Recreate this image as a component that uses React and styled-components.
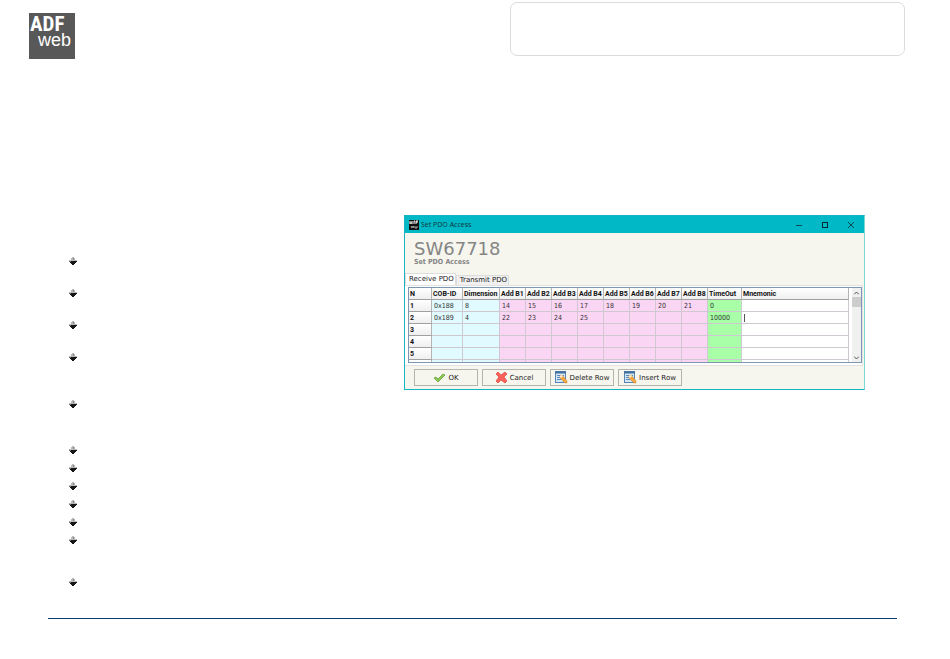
import React from "react";
import styled, { createGlobalStyle } from "styled-components";

const GlobalStyle = createGlobalStyle`
  * {
    box-sizing: border-box;
  }
  body {
    margin: 0;
    background: #fff;
    font-family: "DejaVu Sans", Verdana, sans-serif;
  }
`;

const Header = styled.header`
  display: flex;
  justify-content: space-between;
  align-items: flex-start;
  padding: 2px 45px 0 29px;
`;
const Logo = styled.a`
  display: block;
  margin-top: 11px;
  height: 46px;
`;
const HeaderBox = styled.div`
  width: 46%;
  max-width: 395px;
  height: 54px;
  border: 1px solid #dcdcdc;
  border-radius: 7px;
`;
const Main = styled.main`
  display: flex;
  align-items: flex-start;
  padding: 156px 85px 0 69px;
`;
const BulletList = styled.ul`
  width: 335px;
  flex-shrink: 0;
  margin: 0;
  padding: 42px 0 0;
  list-style: none;
`;
const Bullet = styled.li`
  height: ${(props) => props.$space}px;
  line-height: 0;
`;
const Dialog = styled.section`
  flex: 1;
  min-width: 0;
  background: #f7f6ee;
  border: 1px solid #16b4c2;
  border-right-color: #7fd8d8;
`;
const TitleBar = styled.div`
  display: flex;
  align-items: center;
  height: 17px;
  padding-left: 4px;
  background: #00b8c6;
`;
const Title = styled.span`
  flex: 1;
  margin-left: 2px;
  font-family: "Open Sans", sans-serif;
  font-size: 7px;
  color: #10343a;
`;
const WindowButton = styled.button`
  display: flex;
  align-items: center;
  justify-content: center;
  width: 26px;
  height: 17px;
  padding: 0;
  border: 0;
  background: none;
`;
const Heading = styled.div`
  height: 40px;
  padding: 7px 9px 0;
  color: #858585;
`;
const Product = styled.h1`
  margin: 0;
  font-size: 18px;
  line-height: 18px;
  font-weight: normal;
`;
const Subtitle = styled.h2`
  margin: 0;
  font-family: "DejaVu Sans Condensed", "DejaVu Sans", sans-serif;
  font-size: 7px;
  line-height: 8px;
`;
const Tabs = styled.div`
  display: flex;
  align-items: flex-end;
  height: 12px;
`;
const Tab = styled.button`
  height: ${(props) => (props.$active ? 12 : 10)}px;
  padding: 0 1px 0 3px;
  border: 1px solid #dcdcdc;
  border-bottom: 0;
  background: ${(props) => (props.$active ? "#fff" : "#f0f0f0")};
  font-family: inherit;
  font-size: 7px;
  line-height: 9px;
  color: #222;
`;
const Panel = styled.div`
  padding: 1px 0 2px 2px;
  margin-right: 1px;
  background: #fff;
  border: 1px solid #e2e2e2;
  border-left: 0;
`;
const GridBox = styled.div`
  display: flex;
  height: 76px;
  margin-left: 1px;
  overflow: hidden;
  border: 1px solid #7c97b4;
`;
const GridArea = styled.div`
  flex: 1;
  min-width: 0;
  overflow: hidden;
`;
const Grid = styled.table`
  width: 100%;
  table-layout: fixed;
  border-collapse: separate;
  border-spacing: 0;
  font-family: Roboto, sans-serif;
  font-size: 7px;
  line-height: 10px;
  color: #111;
`;
const Column = styled.col`
  width: ${(props) => (props.$width ? `${props.$width}px` : "auto")};
`;
const HeadCell = styled.th`
  height: 12px;
  padding: 0 0 0 1px;
  overflow: hidden;
  white-space: nowrap;
  text-align: left;
  border-right: 1px solid #b4b4b4;
  border-bottom: 1px solid #a0a0a0;
  background: linear-gradient(#fff, #efefef);
`;
const Cell = styled.td`
  height: 12px;
  padding: 0 0 0 2px;
  font-family: "DejaVu Sans Condensed", "DejaVu Sans", sans-serif;
  color: #333;
  white-space: nowrap;
  border-right: 1px solid #d0c8d0;
  border-bottom: 1px solid #d0c8d0;
  background: ${(props) => props.$color};
`;
const Caret = styled.span`
  display: block;
  width: 1px;
  height: 8px;
  background: #555;
`;
const ScrollBar = styled.div`
  display: flex;
  flex-direction: column;
  align-items: center;
  width: 9px;
  margin-left: 3px;
  background: #f0f0f0;
`;
const ScrollButton = styled.button`
  display: flex;
  align-items: center;
  justify-content: center;
  width: 9px;
  height: 9px;
  padding: 0;
  border: 0;
  background: none;
`;
const Thumb = styled.div`
  width: 9px;
  height: 10px;
  margin-bottom: auto;
  background: #cdcdcd;
`;
const Actions = styled.div`
  display: flex;
  gap: 4px;
  padding: 3px 9px;
`;
const ActionButton = styled.button`
  display: flex;
  align-items: center;
  justify-content: center;
  gap: 2px;
  width: 64px;
  height: 17px;
  padding: 0;
  border: 1px solid #b5b4ad;
  background: #f7f6ee;
  font-family: inherit;
  font-size: 7px;
  color: #222;
  white-space: nowrap;
`;
const Rule = styled.hr`
  margin: 30px 53px 0 48px;
  border: 0;
  border-top: 1px solid #0b3d75;
`;

const bulletSpaces = [32, 32, 32, 47, 46, 18, 18, 18, 18, 18, 42, 10];

const cyan = "#e0faff";
const pink = "#fbd5f4";
const green = "#a8ffa8";

const columns = [
  { name: "N", width: 23 },
  { name: "COB-ID", width: 31, color: cyan },
  { name: "Dimension", width: 37, color: cyan },
  { name: "Add B1", width: 26, color: pink },
  { name: "Add B2", width: 26, color: pink },
  { name: "Add B3", width: 26, color: pink },
  { name: "Add B4", width: 26, color: pink },
  { name: "Add B5", width: 26, color: pink },
  { name: "Add B6", width: 26, color: pink },
  { name: "Add B7", width: 26, color: pink },
  { name: "Add B8", width: 26, color: pink },
  { name: "TimeOut", width: 34, color: green },
  { name: "Mnemonic", color: "#fff" },
];

const rows = [
  ["1", "0x188", "8", "14", "15", "16", "17", "18", "19", "20", "21", "0"],
  ["2", "0x189", "4", "22", "23", "24", "25", "", "", "", "", "10000"],
  ["3"],
  ["4"],
  ["5"],
  [""],
];

function LogoMark() {
  return (
    <svg width="46" height="46" viewBox="0 0 46 46">
      <rect width="46" height="46" fill="#585858" />
      <text fill="#fff" fontFamily="'Liberation Sans', sans-serif" fontSize="18">
        <tspan
          x="1"
          y="18"
          fontFamily="'Roboto Condensed', 'Liberation Sans', sans-serif"
          fontWeight="bold"
          fontSize="21"
        >
          ADF
        </tspan>
        <tspan x="9" y="33">
          web
        </tspan>
      </text>
    </svg>
  );
}

function BulletMark() {
  return (
    <svg width="8" height="8" viewBox="0 0 8 8">
      <path d="M3 0h2v1h1v2h2v1H0V3h2V1h1z" fill="#b9b9b9" />
      <path d="M4 1h1v2H4z" fill="#8c8c8c" />
      <path d="M1 4h7v1H7v1H6v1H5v1H3V7H2V6H1z" fill="#161616" />
      <path d="M0 4h2v1H0z" fill="#777" />
    </svg>
  );
}

function AppIcon() {
  return (
    <svg width="10" height="10" viewBox="0 0 10 10">
      <rect width="10" height="10" fill="#111" />
      <path d="M1 4V1M3 1v3M5 1v3M7 4V1h2M1 3h2M5 1h1M7 2h2" stroke="#fff" fill="none" />
      <path d="M2 6l1 2 1-2 1 2M6 6v2h2V6" stroke="#aaa" fill="none" />
    </svg>
  );
}

function CheckIcon() {
  return (
    <svg width="13" height="10" viewBox="0 0 13 10">
      <path d="M1 5l2-1 2 2 5-5 2 1-7 7z" fill="#8ccb4f" stroke="#5d9732" strokeWidth="0.7" />
    </svg>
  );
}

function CrossIcon() {
  return (
    <svg width="13" height="13" viewBox="0 0 13 13">
      <path
        d="M1 3l2-2 3 3 4-3 2 2-3 3 3 4-2 2-4-3-3 3-2-2 3-4z"
        fill="#f8625a"
        stroke="#dd423c"
        strokeWidth="0.7"
      />
    </svg>
  );
}

function RowIcon() {
  return (
    <svg width="13" height="13" viewBox="0 0 13 13">
      <rect x="0.5" y="0.5" width="10" height="11" fill="#d5e6f6" stroke="#5685b4" />
      <path d="M0 1.5h11" stroke="#416f9e" strokeWidth="2" />
      <path d="M2 4.500h3M6 4.500h3M2 6.500h3M2 8.500h4" stroke="#5788bb" />
      <path d="M5 5l2-1 5 6 0 2-2 0-5-5z" fill="#f4a641" stroke="#c98330" strokeWidth="0.5" />
      <path d="M5 5l2-1 1 1-2 2-1-1z" fill="#fff0cf" />
    </svg>
  );
}

const actions = [
  { label: "OK", Icon: CheckIcon },
  { label: "Cancel", Icon: CrossIcon },
  { label: "Delete Row", Icon: RowIcon },
  { label: "Insert Row", Icon: RowIcon },
];

function PdoGrid() {
  return (
    <GridBox>
      <GridArea>
        <Grid>
          <colgroup>
            {columns.map((column) => (
              <Column key={column.name} $width={column.width} />
            ))}
          </colgroup>
          <thead>
            <tr>
              {columns.map((column) => (
                <HeadCell key={column.name} scope="col">
                  {column.name}
                </HeadCell>
              ))}
            </tr>
          </thead>
          <tbody>
            {rows.map((row, rowIndex) => (
              <tr key={rowIndex}>
                <HeadCell scope="row">{row[0]}</HeadCell>
                {columns.slice(1).map((column, index) => (
                  <Cell key={column.name} $color={column.color}>
                    {row[index + 1]}
                    {column.name === "Mnemonic" && row[0] === "2" && <Caret />}
                  </Cell>
                ))}
              </tr>
            ))}
          </tbody>
        </Grid>
      </GridArea>
      <ScrollBar>
        <ScrollButton aria-label="Scroll up">
          <svg width="5" height="4" viewBox="0 0 5 4">
            <path d="M0 3.500l2.500-2.500 2.500 2.500" stroke="#555" fill="none" />
          </svg>
        </ScrollButton>
        <Thumb />
        <ScrollButton aria-label="Scroll down">
          <svg width="5" height="4" viewBox="0 0 5 4">
            <path d="M0 0.500l2.500 2.500 2.500-2.500" stroke="#555" fill="none" />
          </svg>
        </ScrollButton>
      </ScrollBar>
    </GridBox>
  );
}

function PdoDialog() {
  return (
    <Dialog>
      <TitleBar>
        <AppIcon />
        <Title>Set PDO Access</Title>
        <WindowButton aria-label="Minimize">
          <svg width="6" height="6" viewBox="0 0 6 6">
            <path d="M0 3.500h6" stroke="#0c4a50" />
          </svg>
        </WindowButton>
        <WindowButton aria-label="Maximize">
          <svg width="6" height="6" viewBox="0 0 6 6">
            <rect x="0.5" y="0.5" width="5" height="5" fill="none" stroke="#04282c" />
          </svg>
        </WindowButton>
        <WindowButton aria-label="Close">
          <svg width="6" height="6" viewBox="0 0 6 6">
            <path d="M0 0l6 6M6 0L0 6" stroke="#0c4a50" />
          </svg>
        </WindowButton>
      </TitleBar>
      <Heading>
        <Product>SW67718</Product>
        <Subtitle>Set PDO Access</Subtitle>
      </Heading>
      <Tabs role="tablist">
        <Tab role="tab" aria-selected="true" $active>
          Receive PDO
        </Tab>
        <Tab role="tab" aria-selected="false">
          Transmit PDO
        </Tab>
      </Tabs>
      <Panel>
        <PdoGrid />
      </Panel>
      <Actions>
        {actions.map(({ label, Icon }) => (
          <ActionButton key={label}>
            <Icon />
            {label}
          </ActionButton>
        ))}
      </Actions>
    </Dialog>
  );
}

function App() {
  return (
    <>
      <GlobalStyle />
      <Header>
        <Logo href="#" aria-label="ADFweb">
          <LogoMark />
        </Logo>
        <HeaderBox />
      </Header>
      <Main>
        <BulletList>
          {bulletSpaces.map((space, index) => (
            <Bullet key={index} $space={space}>
              <BulletMark />
            </Bullet>
          ))}
        </BulletList>
        <PdoDialog />
      </Main>
      <Rule />
    </>
  );
}

export default App;
